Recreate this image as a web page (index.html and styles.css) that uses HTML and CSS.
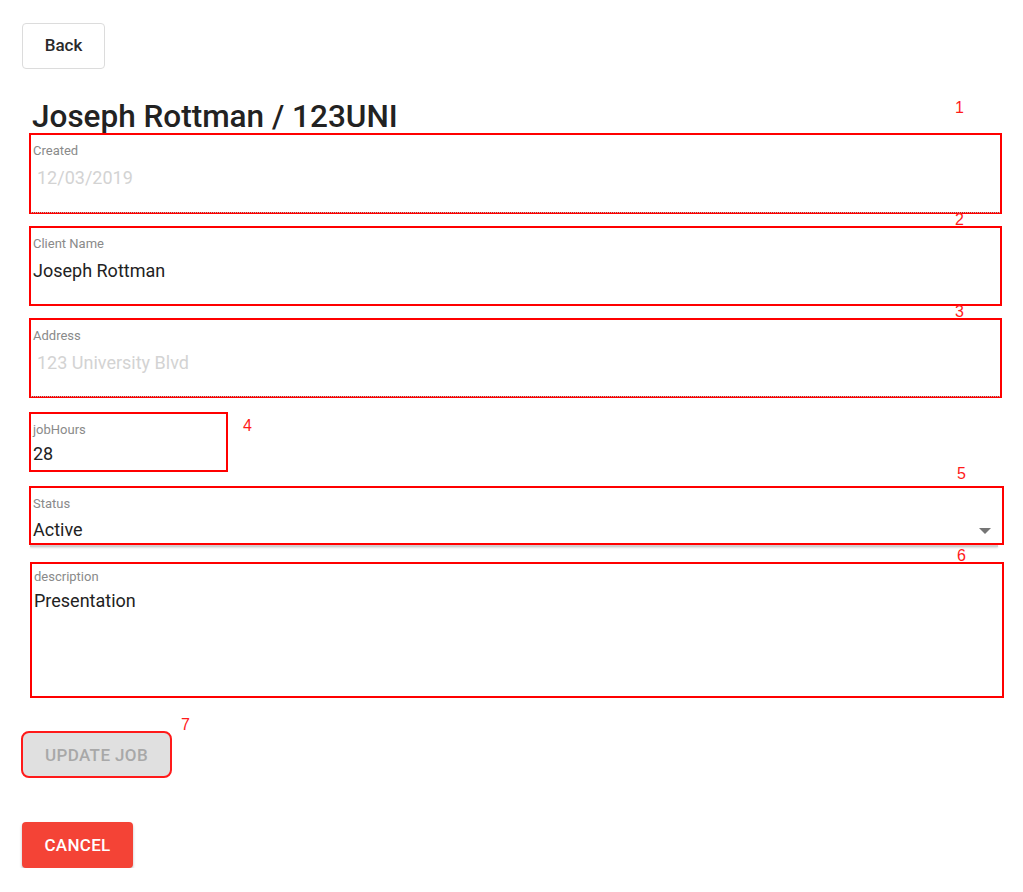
FILE: index.html
```html
<!DOCTYPE html>
<html lang="en">
<head>
<meta charset="utf-8">
<title>Edit Job</title>
<link rel="stylesheet" href="styles.css">
</head>
<body>
<div class="page">
  <button class="back-btn" type="button">Back</button>
  <h1 class="title">Joseph Rottman / 123UNI</h1>

  <form class="form">
    <div class="field field-1 disabled">
      <span class="mark mark-right">1</span>
      <label class="label">Created</label>
      <div class="value muted">12/03/2019</div>
    </div>

    <div class="field field-2">
      <span class="mark mark-right">2</span>
      <label class="label">Client Name</label>
      <div class="value">Joseph Rottman</div>
    </div>

    <div class="field field-3 disabled">
      <span class="mark mark-right">3</span>
      <label class="label">Address</label>
      <div class="value muted">123 University Blvd</div>
    </div>

    <div class="field field-4">
      <span class="mark mark-side">4</span>
      <label class="label">jobHours</label>
      <div class="value">28</div>
    </div>

    <div class="select-wrap">
      <div class="field field-5">
        <span class="mark mark-right">5</span>
        <label class="label">Status</label>
        <div class="value select-value">
          <span>Active</span>
          <svg class="arrow" width="14" height="8" viewBox="0 0 14 8"><path d="M1 1 L7 7 L13 1 Z" fill="#757575"/></svg>
        </div>
      </div>
      <div class="select-line"></div>
    </div>

    <div class="field field-6">
      <span class="mark mark-right">6</span>
      <label class="label">description</label>
      <div class="value">Presentation</div>
    </div>

    <div class="update-row">
      <button class="update-btn" type="button" disabled>UPDATE JOB</button>
      <span class="mark mark-btn">7</span>
    </div>

    <button class="cancel-btn" type="button">CANCEL</button>
  </form>
</div>
</body>
</html>
```

FILE: styles.css
```css
* { box-sizing: border-box; }

html, body {
  margin: 0;
  padding: 0;
  background: #ffffff;
}

body {
  font-family: Roboto, "Liberation Sans", Arial, sans-serif;
  color: #212121;
}

.page {
  padding: 23px 19px 0 22px;
}

.back-btn {
  display: block;
  width: 83px;
  height: 46px;
  border: 1px solid #dcdcdc;
  border-radius: 4px;
  background: #ffffff;
  font-family: Roboto, "Liberation Sans", Arial, sans-serif;
  font-size: 17px;
  font-weight: 500;
  color: #2a2a2a;
  padding: 0 0 2px 0;
}

.title {
  margin: 30px 0 0 10px;
  font-size: 31.5px;
  line-height: 36px;
  font-weight: 500;
  color: #222;
}

.form {
  margin-left: 7px;
  display: flex;
  flex-direction: column;
  align-items: flex-start;
}

.field {
  position: relative;
  width: 973px;
  border: 2px solid #ff0000;
  padding: 8px 2px 0 2px;
}

.label {
  display: block;
  font-size: 13px;
  line-height: 16px;
  color: #8a8a8a;
}

.value {
  margin-top: 8px;
  font-size: 18px;
  line-height: 22px;
  color: #222;
}

.value.muted {
  color: #d3d3d3;
  padding-left: 4px;
}

.field.disabled::after {
  content: "";
  position: absolute;
  left: 0;
  right: 0;
  bottom: -1px;
  border-bottom: 1px dotted #b5b5b5;
}

.field-1 { height: 81px; margin-top: -2px; }
.field-2 { height: 80px; margin-top: 12px; }
.field-3 { height: 80px; margin-top: 12px; }
.field-4 { width: 199px; height: 60px; margin-top: 14px; }
.field-4 .value { margin-top: 5px; }

.select-wrap { margin-top: 14px; }
.field-5 { width: 975px; height: 59px; }
.field-6 { width: 974px; height: 136px; margin-top: 15px; margin-left: 1px; padding-top: 5px; }
.field-6 .value { margin-top: 5px; }

.select-value {
  display: flex;
  align-items: center;
  justify-content: space-between;
  margin-top: 7px;
}

.arrow {
  margin-right: 8px;
  margin-top: 2px;
}

.select-line {
  margin-left: 1px;
  width: 968px;
  height: 2px;
  background: #d0d0d0;
  box-shadow: 0 1px 2px rgba(0,0,0,0.15);
}

.mark {
  position: absolute;
  font-family: "Liberation Sans", Arial, sans-serif;
  font-size: 16px;
  line-height: 18px;
  color: #ff1a1a;
}

.mark-right { right: 36px; top: -36px; }
.field-2 .mark-right { top: -17px; }
.field-3 .mark-right { top: -17px; }
.field-5 .mark-right { top: -23px; }
.field-6 .mark-right { top: -17px; }
.mark-side { left: 212px; top: 3px; }

.update-row {
  position: relative;
  margin-top: 33px;
  margin-left: -8px;
}

.update-btn {
  width: 151px;
  height: 47px;
  border: 2px solid #ff1a1a;
  border-radius: 8px;
  background: #e0e0e0;
  color: #a8a8a8;
  font-family: Roboto, "Liberation Sans", Arial, sans-serif;
  font-size: 17px;
  font-weight: 500;
  letter-spacing: 0.4px;
  padding: 0;
}

.mark-btn { left: 160px; top: -15px; }

.cancel-btn {
  margin-top: 44px;
  margin-left: -7px;
  width: 111px;
  height: 46px;
  border: none;
  border-radius: 4px;
  background: #f44336;
  color: #ffffff;
  font-family: Roboto, "Liberation Sans", Arial, sans-serif;
  font-size: 17px;
  font-weight: 500;
  letter-spacing: 0.3px;
  padding: 0;
  box-shadow: 0 2px 3px rgba(0,0,0,0.25);
}
```
